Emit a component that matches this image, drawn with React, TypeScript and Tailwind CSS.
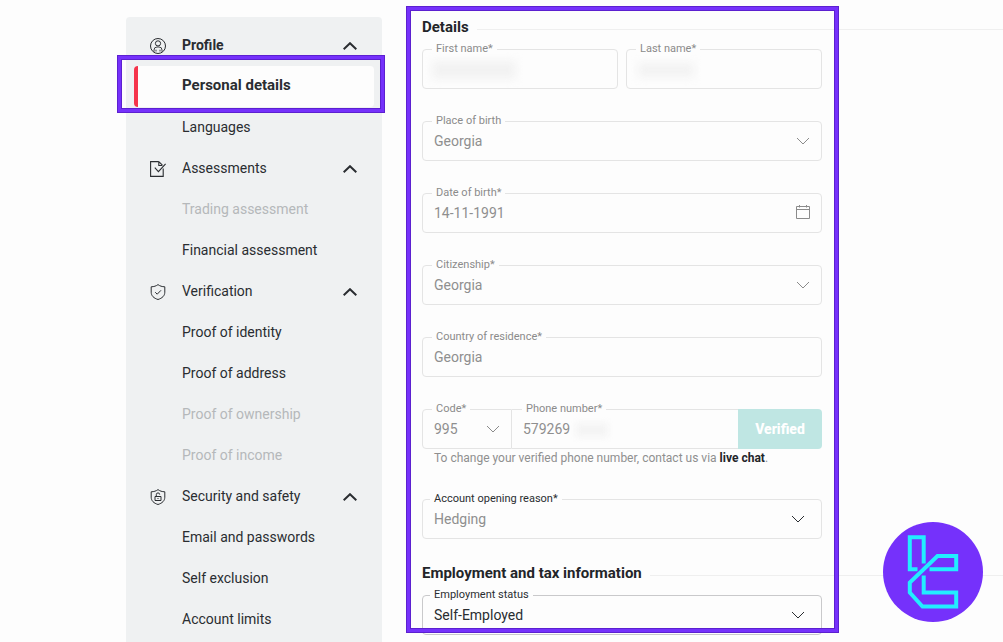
import { useState, type ReactNode } from "react";
import clsx from "clsx";

// Profile settings page: sidebar navigation + personal details form

type NavGroup = {
  title: string;
  icon: ReactNode;
  items: { label: string; disabled?: boolean }[];
};

const iconProps = {
  viewBox: "0 0 16 16",
  fill: "none",
  stroke: "currentColor",
  className: "size-4",
  "aria-hidden": true,
} as const;

function UserIcon() {
  return (
    <svg {...iconProps}>
      <circle cx="8" cy="8" r="7.5" />
      <circle cx="8" cy="5.4" r="2.6" />
      <path d="M4 13.8V12a3 3 0 0 1 3-3h2a3 3 0 0 1 3 3v1.8M6 13.5v-1.8M10 13.5v-1.8" strokeWidth="0.9" />
    </svg>
  );
}

function DocumentIcon() {
  return (
    <svg {...iconProps}>
      <path d="M8.8.6H.6v14.8h12.6V7.6M8.8.6v3.9h3.6M8.8.6l3.6 3.6" strokeWidth="1.1" />
      <path d="m4.8 6.6 3.6 4 7.2-7.8" strokeWidth="1.1" />
    </svg>
  );
}

function ShieldIcon({ children }: { children: ReactNode }) {
  return (
    <svg {...iconProps}>
      <path d="M8 .6C6.2 2 4 2.7 1.2 2.8v5.4c0 3.6 2.6 6 6.8 7.3 4.2-1.3 6.8-3.7 6.8-7.3V2.8C12 2.7 9.8 2 8 .6Z" />
      {children}
    </svg>
  );
}

const groups: NavGroup[] = [
  {
    title: "Profile",
    icon: <UserIcon />,
    items: [{ label: "Personal details" }, { label: "Languages" }],
  },
  {
    title: "Assessments",
    icon: <DocumentIcon />,
    items: [{ label: "Trading assessment", disabled: true }, { label: "Financial assessment" }],
  },
  {
    title: "Verification",
    icon: (
      <ShieldIcon>
        <path d="m5.2 8.2 2 2L11 6.3" />
      </ShieldIcon>
    ),
    items: [
      { label: "Proof of identity" },
      { label: "Proof of address" },
      { label: "Proof of ownership", disabled: true },
      { label: "Proof of income", disabled: true },
    ],
  },
  {
    title: "Security and safety",
    icon: (
      <ShieldIcon>
        <path d="M5 7.5h6v4H5zM6.3 7.5V5.6a1.7 1.7 0 0 1 3.4 0M8 9v1" />
      </ShieldIcon>
    ),
    items: [{ label: "Email and passwords" }, { label: "Self exclusion" }, { label: "Account limits" }],
  },
];

function Chevron({ className }: { className?: string }) {
  return (
    <svg viewBox="0 0 14 8" fill="none" stroke="currentColor" className={clsx("h-2 w-3.5", className)} aria-hidden>
      <path d="m1 1 6 6 6-6" />
    </svg>
  );
}

function Highlight({ className }: { className: string }) {
  return (
    <div
      className={clsx(
        "pointer-events-none absolute border-3 border-[#7531fb] ring-1 ring-[#5c20d0] inset-ring-1 inset-ring-[#5c20d0]",
        className
      )}
    />
  );
}

function Sidebar() {
  const [active, setActive] = useState("Personal details");

  return (
    <nav className="mt-[17px] w-64 shrink-0 rounded-t bg-[#eff1f2] px-2 pt-2 text-sm text-[#2a2d31]">
      {groups.map((group) => {
        const current = group.items.some((item) => item.label === active);
        return (
          <section key={group.title}>
            <button type="button" className="flex h-[41px] w-full items-center pr-[17px] pl-4">
              {group.icon}
              <span className={clsx("ml-4 flex-1 pb-0.5 text-left", current && "font-bold")}>{group.title}</span>
              <svg viewBox="0 0 14 8" fill="none" stroke="currentColor" strokeWidth="2" className="h-2 w-3.5" aria-hidden>
                <path d="m.7 7.2 6.3-6 6.3 6" />
              </svg>
            </button>
            <ul>
              {group.items.map((item) => (
                <li key={item.label} className="relative">
                  <a
                    href="#"
                    aria-disabled={item.disabled}
                    onClick={() => !item.disabled && setActive(item.label)}
                    className={clsx(
                      "flex h-[41px] items-center rounded-sm border-l-4 pb-0.5 pl-11",
                      item.label === active
                        ? "border-[#f5344b] bg-[#fdfdfd] text-[15px] font-bold"
                        : "border-transparent",
                      item.disabled && "text-[#b5b8ba]"
                    )}
                  >
                    {item.label}
                  </a>
                  {item.label === active && <Highlight className="-top-2.5 -right-2.5 -bottom-[5px] -left-4" />}
                </li>
              ))}
            </ul>
          </section>
        );
      })}
    </nav>
  );
}

function SectionTitle({ children }: { children: ReactNode }) {
  return (
    <div className="flex h-5 items-center gap-2">
      <h2 className="text-[15px] leading-5 font-bold text-[#232529]">{children}</h2>
      <div className="mt-1 h-px flex-1 bg-[#efefef]" />
    </div>
  );
}

type FieldProps = {
  id: string;
  label: string;
  value?: string;
  kind?: "text" | "select";
  tone?: "muted" | "mixed" | "dark";
  className?: string;
  children?: ReactNode;
};

function Field({ id, label, value = "", kind = "text", tone = "muted", className, children }: FieldProps) {
  const muted = tone === "muted";
  const control = clsx(
    "h-10 w-full appearance-none border bg-transparent px-[11px] text-sm opacity-100 outline-none",
    tone === "dark" ? "border-[#c9c9cb] text-[#2a2d31]" : "border-[#e4e4e4] text-[#8f8f8f]",
    className ?? "rounded"
  );

  return (
    <div className="relative">
      <label
        htmlFor={id}
        className={clsx(
          "absolute -top-[7px] bg-[#fdfdfd] px-1 text-[11px] leading-[14px] whitespace-nowrap",
          muted ? "left-2.5 text-[#8b8b8b]" : "left-2 text-[#2a2d31]"
        )}
      >
        {label}
      </label>
      {kind === "select" ? (
        <>
          <select id={id} defaultValue={value} disabled={muted} className={control}>
            <option>{value}</option>
          </select>
          <Chevron
            className={clsx(
              "pointer-events-none absolute top-4",
              muted ? "right-3 text-[#8b8b8b]" : "right-[17px] text-[#2a2d31]"
            )}
          />
        </>
      ) : (
        <input id={id} defaultValue={value} disabled={muted} className={control} />
      )}
      {children}
    </div>
  );
}

function DetailsForm() {
  return (
    <form className="relative flex-1 pt-[17px] pl-4" onSubmit={(e) => e.preventDefault()}>
      <SectionTitle>Details</SectionTitle>

      <div className="mt-3 flex w-[400px] flex-col gap-8">
        <div className="grid grid-cols-2 gap-2">
          <Field id="first-name" label="First name*">
            <div className="absolute top-3 left-2.5 h-[18px] w-[84px] bg-[#f2f2f2] blur-[5px]" />
          </Field>
          <Field id="last-name" label="Last name*">
            <div className="absolute top-3.5 left-3 h-3.5 w-14 bg-[#f2f2f2] blur-[5px]" />
          </Field>
        </div>
        <Field id="birth-place" label="Place of birth" value="Georgia" kind="select" />
        <Field id="birth-date" label="Date of birth*" value="14-11-1991">
          <svg
            viewBox="0 0 14 14"
            fill="none"
            stroke="currentColor"
            className="absolute top-3 right-3 size-3.5 text-[#8b8b8b]"
            aria-hidden
          >
            <path d="M.5 1.5h13v12H.5zM.5 4.5h13M3.5 0v2.5M10.5 0v2.5" />
          </svg>
        </Field>
        <Field id="citizenship" label="Citizenship*" value="Georgia" kind="select" />
        <Field id="residence" label="Country of residence*" value="Georgia" />
        <div>
          <div className="flex">
            <div className="w-[90px]">
              <Field id="code" label="Code*" value="995" kind="select" className="rounded-l" />
            </div>
            <div className="flex-1">
              <Field id="phone" label="Phone number*" value="579269" className="border-x-0">
                <div className="absolute top-3.5 left-16 h-3.5 w-8 bg-[#f4f4f4] blur-[3px]" />
              </Field>
            </div>
            <button
              type="button"
              disabled
              className="w-[84px] rounded-r bg-[#bfe6e3] text-sm font-extrabold text-white"
            >
              Verified
            </button>
          </div>
          <p className="pl-3 text-xs leading-[18px] text-[#8f8f8f]">
            To change your verified phone number, contact us via{" "}
            <a href="#" className="font-bold text-[#232529]">
              live chat
            </a>
            .
          </p>
        </div>
        <Field id="reason" label="Account opening reason*" value="Hedging" kind="select" tone="mixed" />
      </div>

      <div className="mt-6">
        <SectionTitle>Employment and tax information</SectionTitle>
      </div>
      <div className="mt-3 w-[400px]">
        <Field id="employment" label="Employment status" value="Self-Employed" kind="select" tone="dark" />
      </div>

      <Highlight className="top-[7px] bottom-[3px] left-px w-[431px]" />
    </form>
  );
}

function Logo() {
  return (
    <svg
      viewBox="0 0 100 100"
      fill="none"
      stroke="#22edff"
      strokeWidth="4"
      className="fixed right-5 bottom-5 size-[100px]"
      role="img"
      aria-label="Logo"
    >
      <circle cx="50" cy="50" r="50" fill="#7531fb" stroke="none" />
      <path d="M34.5 47.3H26.8V15.3H40.7V41.5" />
      <path d="M46.5 47.3H73.2V34H54.5L26.8 60.5V70.5L39.5 84.5H73.2V70.5H40.7V53.5" />
    </svg>
  );
}

export default function App() {
  return (
    <div className="flex min-h-screen bg-[#fdfdfd] pl-[126px] font-[Roboto,sans-serif]">
      <Sidebar />
      <main className="ml-6 flex flex-1 flex-col">
        <div className="flex">
          <DetailsForm />
        </div>
      </main>
      <Logo />
    </div>
  );
}
